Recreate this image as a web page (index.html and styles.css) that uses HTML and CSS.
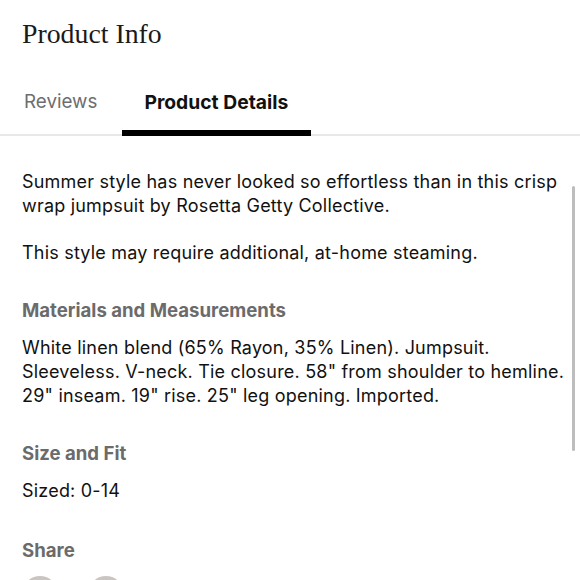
FILE: index.html
```html
<!DOCTYPE html>
<html>
<head>
<meta charset="utf-8">
<link rel="stylesheet" href="styles.css">
</head>
<body>
<div class="page">
  <h1 class="title">Product Info</h1>
  <nav class="tabs">
    <div class="tab">Reviews</div>
    <div class="tab active">Product Details</div>
  </nav>
  <div class="content">
    <p class="text">Summer style has never looked so effortless than in this crisp wrap jumpsuit by Rosetta Getty Collective.</p>
    <p class="text gap">This style may require additional, at-home steaming.</p>
    <h2 class="heading">Materials and Measurements</h2>
    <p class="text">White linen blend (65% Rayon, 35% Linen). Jumpsuit. Sleeveless. V-neck. Tie closure. 58" from shoulder to hemline. 29" inseam. 19" rise. 25" leg opening. Imported.</p>
    <h2 class="heading">Size and Fit</h2>
    <p class="text">Sized: 0-14</p>
    <h2 class="heading share">Share</h2>
    <div class="icons">
      <span class="circle"></span>
      <span class="circle"></span>
    </div>
  </div>
  <div class="scrollbar"></div>
</div>
</body>
</html>
```
FILE: styles.css
```css
html, body {
  margin: 0;
  padding: 0;
  background: #fff;
}
.page {
  position: relative;
  width: 580px;
  height: 580px;
  overflow: hidden;
  font-family: Inter, "Liberation Sans", Arial, sans-serif;
  color: #111;
}
.title {
  margin: 0;
  padding: 17px 0 0 22px;
  font-family: "Liberation Serif", "DejaVu Serif", serif;
  font-weight: normal;
  font-size: 27.8px;
  line-height: 34px;
  color: #1a1a1a;
}
.tabs {
  display: flex;
  margin-top: 40px;
  padding-left: 24px;
  border-bottom: 2px solid #e8e8e8;
}
.tab {
  font-size: 18.8px;
  line-height: 22px;
  padding: 0 0 17px;
  color: #6e6e6e;
  border-bottom: 6px solid transparent;
  margin-bottom: -2px;
}
.tab.active {
  margin-left: 25px;
  padding: 0 23px 17px 22px;
  font-size: 19.3px;
  color: #111;
  font-weight: bold;
  border-bottom-color: #000;
}
.content {
  padding: 34px 10px 0 22px;
}
.text {
  margin: 0;
  font-size: 18px;
  letter-spacing: 0.2px;
  line-height: 24px;
  color: #111;
}
.text.gap {
  margin-top: 23px;
}
.heading {
  margin: 33px 0 14px;
  font-size: 18.6px;
  line-height: 24px;
  font-weight: bold;
  color: #6b6b6b;
}
.heading.share {
  margin-top: 35px;
}
.icons {
  display: flex;
  gap: 30px;
}
.circle {
  width: 36px;
  height: 36px;
  border-radius: 50%;
  background: #c9c5c2;
}
.scrollbar {
  position: absolute;
  left: 572px;
  top: 186px;
  width: 3px;
  height: 265px;
  border-radius: 2px;
  background: #bdbdbd;
}
```
